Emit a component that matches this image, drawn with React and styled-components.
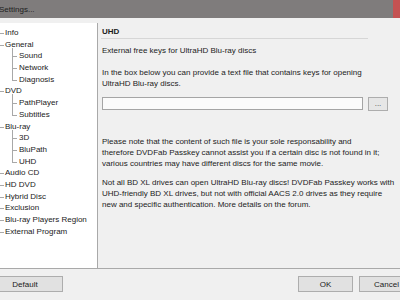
import React from "react";
import styled, { createGlobalStyle } from "styled-components";

const Global = createGlobalStyle`
  html, body { margin: 0; padding: 0; background: #f0f0f0; overflow: hidden; }
  body { font-family: "Liberation Sans", Arial, sans-serif; font-size: 8px; color: #1c1c1c; }
`;

const Window = styled.div`
  width: 414px;
  height: 300px;
  display: flex;
  flex-direction: column;
  background: #f0f0f0;
`;

const TitleBar = styled.div`
  height: 18px;
  flex: none;
  background: #7f7c7c;
  display: flex;
  align-items: center;
  justify-content: space-between;
`;

const TitleText = styled.span`
  margin-left: -1px;
  font-size: 8px;
  color: #1e1e1e;
`;

const CloseBox = styled.div`
  width: 21px;
  align-self: stretch;
  background: #c45252;
`;

const Main = styled.div`
  margin-top: 5px;
  height: 246px;
  box-sizing: border-box;
  display: flex;
  border-bottom: 1px solid #a9a9a9;
`;

const Tree = styled.ul`
  list-style: none;
  margin: 0;
  padding: 4px 0 0 0;
  width: 97px;
  flex: none;
  background: #ffffff;
  border-right: 1px solid #a9a9a9;
`;

const Row = styled.li`
  position: relative;
  height: 11.7px;
  line-height: 11.7px;
  padding-left: ${(p) => (p.$child ? 19 : 5)}px;
  white-space: nowrap;
  color: #1a1a1a;

  &::before {
    content: "";
    position: absolute;
    top: 6px;
    left: ${(p) => (p.$child ? 12 : 0)}px;
    width: ${(p) => (p.$child ? 5 : 4)}px;
    border-top: 1px solid #a8a8a8;
  }

  &::after {
    content: "";
    display: ${(p) => (p.$child || p.$parent ? "block" : "none")};
    position: absolute;
    left: 12px;
    top: ${(p) => (p.$parent ? 9 : 0)}px;
    bottom: ${(p) => (p.$parent ? 0 : p.$last ? 5.7 : 0)}px;
    border-left: 1px solid #a8a8a8;
  }
`;

const Panel = styled.section`
  flex: 1;
  padding: 3px 0 0 4px;
  display: flex;
  flex-direction: column;
`;

const Header = styled.div`
  width: 266px;
  margin-left: -1px;
  padding-left: 1px;
  line-height: 11px;
  padding-bottom: 1px;
  font-weight: bold;
  border-bottom: 1px solid #d6d6d6;
`;

const Text = styled.p`
  margin: ${(p) => p.$mt || 0}px 0 0 0;
  line-height: 11px;
  white-space: nowrap;
`;

const FileRow = styled.div`
  margin-top: 7.5px;
  display: flex;
  align-items: flex-start;
  gap: 5px;
`;

const FileInput = styled.div`
  width: 261px;
  height: 13px;
  box-sizing: border-box;
  background: #fbfbfb;
  border: 1px solid #a5a5a5;
`;

const BrowseButton = styled.button`
  width: 20px;
  height: 14px;
  box-sizing: border-box;
  padding: 0;
  border: 1px solid #adadad;
  background: #e6e6e6;
  color: #4a4a4a;
  font-family: "Liberation Sans", Arial, sans-serif;
  font-size: 8px;
  line-height: 10px;
`;

const Footer = styled.div`
  flex: 1;
  display: flex;
  justify-content: space-between;
  align-items: flex-start;
  padding-top: 7px;
`;

const Group = styled.div`
  display: flex;
  gap: 6px;
`;

const Button = styled.button`
  width: ${(p) => p.$w || 55}px;
  margin-left: ${(p) => p.$ml || 0}px;
  height: 16px;
  box-sizing: border-box;
  padding: 0;
  border: 1px solid #adadad;
  background: #e1e1e1;
  color: #1a1a1a;
  font-family: "Liberation Sans", Arial, sans-serif;
  font-size: 8px;
`;

const tree = [
  { label: "Info" },
  { label: "General", children: ["Sound", "Network", "Diagnosis"] },
  { label: "DVD", children: ["PathPlayer", "Subtitles"] },
  { label: "Blu-ray", children: ["3D", "BluPath", "UHD"] },
  { label: "Audio CD" },
  { label: "HD DVD" },
  { label: "Hybrid Disc" },
  { label: "Exclusion" },
  { label: "Blu-ray Players Region" },
  { label: "External Program" },
];

export default function App() {
  const rows = [];
  tree.forEach((n) => {
    rows.push(
      <Row key={n.label} $parent={!!n.children}>
        {n.label}
      </Row>
    );
    (n.children || []).forEach((c, i, arr) => {
      rows.push(
        <Row key={n.label + c} $child $last={i === arr.length - 1}>
          {c}
        </Row>
      );
    });
  });

  return (
    <>
      <Global />
      <Window>
        <TitleBar>
          <TitleText>Settings...</TitleText>
          <CloseBox />
        </TitleBar>
        <Main>
          <Tree>{rows}</Tree>
          <Panel>
            <Header>UHD</Header>
            <Text $mt={6}>External free keys for UltraHD Blu-ray discs</Text>
            <Text $mt={11}>
              In the box below you can provide a text file that contains keys for opening
              <br />
              UltraHD Blu-ray discs.
            </Text>
            <FileRow>
              <FileInput />
              <BrowseButton>...</BrowseButton>
            </FileRow>
            <Text $mt={25.5}>
              Please note that the content of such file is your sole responsability and
              <br />
              therefore DVDFab Passkey cannot assist you if a certain disc is not found in it;
              <br />
              various countries may have different discs for the same movie.
            </Text>
            <Text $mt={8}>
              Not all BD XL drives can open UltraHD Blu-ray discs! DVDFab Passkey works with
              <br />
              UHD-friendly BD XL drives, but not with official AACS 2.0 drives as they require
              <br />
              new and specific authentication. More details on the forum.
            </Text>
          </Panel>
        </Main>
        <Footer>
          <Button $w={76} $ml={-13}>Default</Button>
          <Group>
            <Button>OK</Button>
            <Button>Cancel</Button>
          </Group>
        </Footer>
      </Window>
    </>
  );
}
